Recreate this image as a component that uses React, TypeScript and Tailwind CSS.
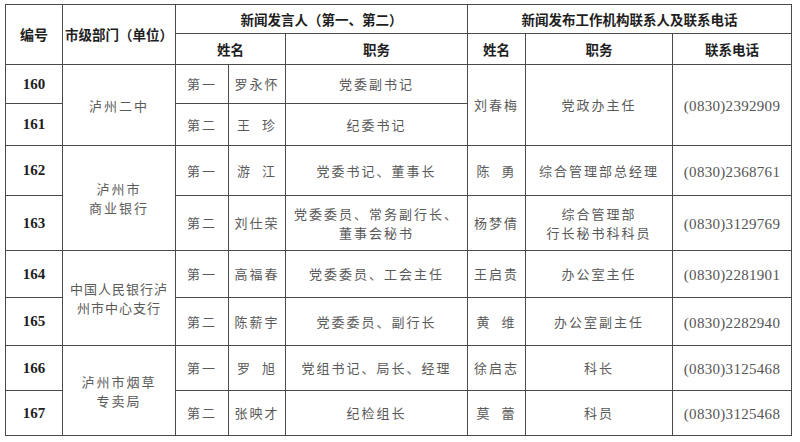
import type { ReactNode } from "react";

type Row = {
    no: number;
    rank: string;
    speaker: string;
    speakerTitle: ReactNode;
    h: string;
};

const cell = "border border-[#4a4a4a] text-center align-middle p-0";
const body = "text-[13px] text-[#5a5a5a] tracking-[2px]";

function Name({ value }: { value: string }) {
    // two-character names are spread across the cell like the printed sheet
    if (value.length === 2) {
        return (
            <span className="inline-flex w-[40px] justify-between">
                <span>{value[0]}</span>
                <span>{value[1]}</span>
            </span>
        );
    }
    return <span>{value}</span>;
}

function Phone({ value }: { value: string }) {
    return (
        <span className="font-['Liberation_Serif',serif] text-[15px] text-[#555] tracking-[0.3px]">
            {value}
        </span>
    );
}

export default function App() {
    const rows: Row[] = [
        { no: 160, rank: "第一", speaker: "罗永怀", speakerTitle: "党委副书记", h: "h-[39px]" },
        { no: 161, rank: "第二", speaker: "王珍", speakerTitle: "纪委书记", h: "h-[42px]" },
        { no: 162, rank: "第一", speaker: "游江", speakerTitle: "党委书记、董事长", h: "h-[50px]" },
        {
            no: 163,
            rank: "第二",
            speaker: "刘仕荣",
            speakerTitle: (
                <span className="leading-[19px] block">
                    党委委员、常务副行长、
                    <br />
                    董事会秘书
                </span>
            ),
            h: "h-[55px]",
        },
        { no: 164, rank: "第一", speaker: "高福春", speakerTitle: "党委委员、工会主任", h: "h-[47px]" },
        { no: 165, rank: "第二", speaker: "陈薪宇", speakerTitle: "党委委员、副行长", h: "h-[48px]" },
        { no: 166, rank: "第一", speaker: "罗旭", speakerTitle: "党组书记、局长、经理", h: "h-[45px]" },
        { no: 167, rank: "第二", speaker: "张映才", speakerTitle: "纪检组长", h: "h-[45px]" },
    ];

    return (
        <div className="w-[800px] h-[442px] bg-white pt-[4px] pl-[5px] font-['Noto_Sans_CJK_SC','Noto_Sans',sans-serif]">
            <table className="table-fixed border-collapse w-[786px] border border-[#4a4a4a]">
                <colgroup>
                    <col className="w-[57px]" />
                    <col className="w-[113px]" />
                    <col className="w-[53px]" />
                    <col className="w-[57px]" />
                    <col className="w-[182px]" />
                    <col className="w-[58px]" />
                    <col className="w-[147px]" />
                    <col className="w-[119px]" />
                </colgroup>
                <thead className="text-[13.5px] font-bold text-[#1e1e1e]">
                    <tr className="h-[29px]">
                        <th rowSpan={2} className={`${cell} text-[14px]`}>
                            编号
                        </th>
                        <th rowSpan={2} className={`${cell} text-[13.5px]`}>
                            市级部门（单位）
                        </th>
                        <th colSpan={3} className={cell}>
                            新闻发言人（第一、第二）
                        </th>
                        <th colSpan={3} className={cell}>
                            新闻发布工作机构联系人及联系电话
                        </th>
                    </tr>
                    <tr className="h-[31px]">
                        <th colSpan={2} className={cell}>
                            姓名
                        </th>
                        <th className={cell}>职务</th>
                        <th className={cell}>姓名</th>
                        <th className={cell}>职务</th>
                        <th className={cell}>联系电话</th>
                    </tr>
                </thead>
                <tbody>
                    {rows.map((r, i) => (
                        <tr key={r.no} className={r.h}>
                            <td className={`${cell} font-['Liberation_Serif',serif] font-bold text-[15px] text-[#1e1e1e]`}>
                                {r.no}
                            </td>
                            {i % 2 === 0 && (
                                <td rowSpan={2} className={`${cell} ${body} leading-[19px]`}>
                                    {i === 0 && "泸州二中"}
                                    {i === 2 && (
                                        <>
                                            泸州市
                                            <br />
                                            商业银行
                                        </>
                                    )}
                                    {i === 4 && (
                                        <span className="tracking-[1px]">
                                            中国人民银行泸
                                            <br />
                                            州市中心支行
                                        </span>
                                    )}
                                    {i === 6 && (
                                        <>
                                            泸州市烟草
                                            <br />
                                            专卖局
                                        </>
                                    )}
                                </td>
                            )}
                            <td className={`${cell} ${body}`}>{r.rank}</td>
                            <td className={`${cell} ${body}`}>
                                <Name value={r.speaker} />
                            </td>
                            <td className={`${cell} ${body}`}>{r.speakerTitle}</td>
                            {i === 0 && (
                                <>
                                    <td rowSpan={2} className={`${cell} ${body}`}>
                                        刘春梅
                                    </td>
                                    <td rowSpan={2} className={`${cell} ${body}`}>
                                        党政办主任
                                    </td>
                                    <td rowSpan={2} className={cell}>
                                        <Phone value="(0830)2392909" />
                                    </td>
                                </>
                            )}
                            {i === 2 && (
                                <>
                                    <td className={`${cell} ${body}`}>
                                        <Name value="陈勇" />
                                    </td>
                                    <td className={`${cell} ${body}`}>综合管理部总经理</td>
                                    <td className={cell}>
                                        <Phone value="(0830)2368761" />
                                    </td>
                                </>
                            )}
                            {i === 3 && (
                                <>
                                    <td className={`${cell} ${body}`}>杨梦倩</td>
                                    <td className={`${cell} ${body} leading-[19px]`}>
                                        综合管理部
                                        <br />
                                        行长秘书科科员
                                    </td>
                                    <td className={cell}>
                                        <Phone value="(0830)3129769" />
                                    </td>
                                </>
                            )}
                            {i === 4 && (
                                <>
                                    <td className={`${cell} ${body}`}>王启贵</td>
                                    <td className={`${cell} ${body}`}>办公室主任</td>
                                    <td className={cell}>
                                        <Phone value="(0830)2281901" />
                                    </td>
                                </>
                            )}
                            {i === 5 && (
                                <>
                                    <td className={`${cell} ${body}`}>
                                        <Name value="黄维" />
                                    </td>
                                    <td className={`${cell} ${body}`}>办公室副主任</td>
                                    <td className={cell}>
                                        <Phone value="(0830)2282940" />
                                    </td>
                                </>
                            )}
                            {i === 6 && (
                                <>
                                    <td className={`${cell} ${body}`}>徐启志</td>
                                    <td className={`${cell} ${body}`}>科长</td>
                                    <td className={cell}>
                                        <Phone value="(0830)3125468" />
                                    </td>
                                </>
                            )}
                            {i === 7 && (
                                <>
                                    <td className={`${cell} ${body}`}>
                                        <Name value="莫蕾" />
                                    </td>
                                    <td className={`${cell} ${body}`}>科员</td>
                                    <td className={cell}>
                                        <Phone value="(0830)3125468" />
                                    </td>
                                </>
                            )}
                        </tr>
                    ))}
                </tbody>
            </table>
        </div>
    );
}
